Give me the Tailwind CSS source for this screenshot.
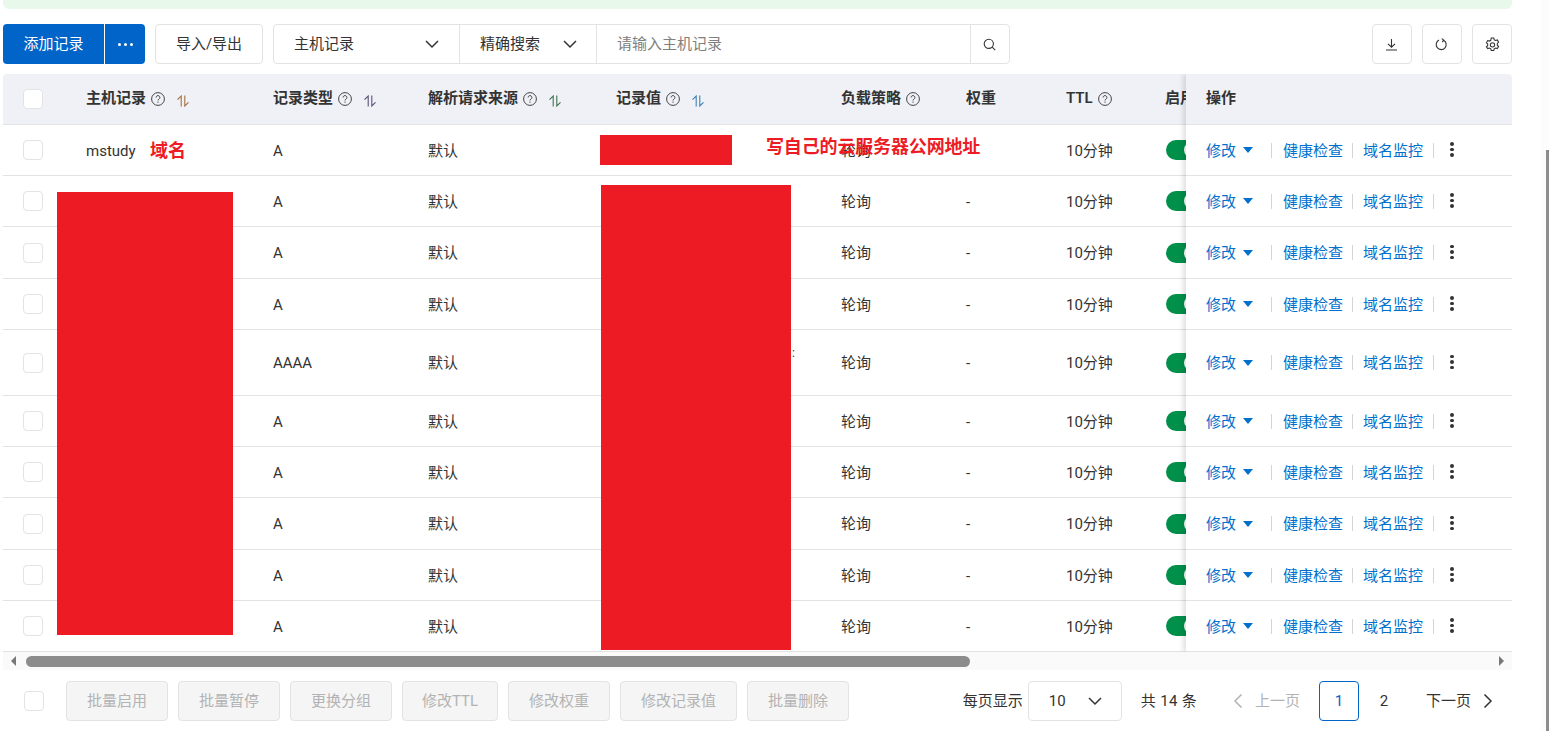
<!DOCTYPE html>
<html lang="en">
<head>
    <meta charset="UTF-8">
    <title>解析记录</title>
    <script src="https://cdn.jsdelivr.net/npm/@tailwindcss/browser@4"></script>
</head>
<body class="relative h-[731px] w-[1549px] overflow-hidden bg-white text-[15px] text-[#333] font-['Roboto','Noto_Sans_CJK_SC',sans-serif]">

    <!-- notice strip cut off by the top edge -->
    <div class="ml-[3px] h-[9px] w-[1509px] rounded-b-md bg-[#e8f8ea]"></div>

    <!-- toolbar -->
    <div class="ml-[3px] mt-[15px] flex h-[40px] w-[1509px] items-stretch">
        <button class="w-[101px] rounded-l bg-[#0064c8] text-white">添加记录</button>
        <button class="ml-px flex w-[40px] items-center justify-center gap-[3px] rounded-r bg-[#0064c8]">
            <span class="size-[3px] rounded-full bg-white"></span><span class="size-[3px] rounded-full bg-white"></span><span class="size-[3px] rounded-full bg-white"></span>
        </button>
        <button class="ml-[10px] w-[108px] rounded border border-[#e3e3e3]">导入/导出</button>
        <div class="ml-[10px] flex w-[737px] rounded border border-[#e3e3e3]">
            <div class="flex w-[186px] items-center justify-between border-r border-[#e3e3e3] pl-[20px] pr-[19px]">
                主机记录
                <svg class="size-[16px]" viewBox="0 0 16 16" fill="none" stroke="#333" stroke-width="1.5"><path d="M2 5l6 6 6-6"/></svg>
            </div>
            <div class="flex w-[137px] items-center justify-between border-r border-[#e3e3e3] pl-[20px] pr-[18px]">
                精确搜索
                <svg class="size-[16px]" viewBox="0 0 16 16" fill="none" stroke="#333" stroke-width="1.5"><path d="M2 5l6 6 6-6"/></svg>
            </div>
            <div class="flex flex-1 items-center pl-[20px] text-[#808080]">请输入主机记录</div>
            <div class="flex w-[39px] items-center justify-center border-l border-[#e3e3e3]">
                <svg class="mr-[2px] size-[13px]" viewBox="0 0 13 13" fill="none" stroke="#333" stroke-width="1.1"><circle cx="5.8" cy="5.8" r="4.6"/><path d="M9.2 9.2l3 3"/></svg>
            </div>
        </div>
        <div class="ml-auto flex gap-[10px]">
            <button class="flex w-[40px] items-center justify-center rounded border border-[#e3e3e3]">
                <svg class="mr-px size-[13px]" viewBox="0 0 13 13" fill="none" stroke="#333" stroke-width="1.1"><path d="M6.5 1v8M3 5.8l3.5 3.4L10 5.8M1 12h11"/></svg>
            </button>
            <button class="flex w-[40px] items-center justify-center rounded border border-[#e3e3e3]">
                <svg class="mr-px size-[13px]" viewBox="0 0 13 13" fill="none" stroke="#333" stroke-width="1.1"><path d="M8.6 2.2A5 5 0 1 1 4 2.1M6.8 0.6l1.9 1.6-1.5 1.9"/></svg>
            </button>
            <button class="flex w-[40px] items-center justify-center rounded border border-[#e3e3e3]">
                <svg class="size-[15px]" viewBox="0 0 14 14" fill="none" stroke="#333" stroke-width="1"><path d="M5.8 1h2.4l.4 1.6 1.3.7 1.6-.5 1.2 2.1-1.2 1.1v1.6l1.2 1.1-1.2 2.1-1.6-.5-1.3.8-.4 1.5H5.8l-.4-1.5-1.3-.8-1.6.5L1.3 9.2l1.2-1.1V6.5L1.3 5.4l1.2-2.1 1.6.5 1.3-.7z"/><circle cx="7" cy="7.3" r="2"/></svg>
            </button>
        </div>
    </div>

    <!-- table, filled in by the script below -->
    <div class="relative ml-[3px] mt-[10px] w-[1509px] overflow-hidden rounded-t">
        <div id="table"></div>
        <!-- sticky action column -->
        <div id="ops" class="absolute right-0 top-0 w-[326px] bg-white shadow-[-3px_0_5px_rgba(0,0,0,0.12)]"></div>
    </div>

    <!-- horizontal scrollbar -->
    <div class="ml-[3px] flex h-[18px] w-[1509px] items-center bg-[#fafafa]">
        <span class="ml-[8px] h-0 w-0 border-y-[5px] border-r-[5px] border-y-transparent border-r-[#777]"></span>
        <div class="ml-[10px] h-[11px] w-[944px] rounded-full bg-[#8c8c8c]"></div>
        <span class="ml-auto mr-[8px] h-0 w-0 border-y-[5px] border-l-[5px] border-y-transparent border-l-[#777]"></span>
    </div>

    <!-- footer -->
    <div class="ml-[3px] mt-[11px] flex h-[40px] w-[1509px] items-center">
        <span class="ml-[21px] size-[20px] rounded border border-[#e3e3e3]"></span>
        <div class="ml-[22px] flex h-full gap-[10px] text-[#b3b3b3]">
            <button class="w-[102px] rounded border border-[#e3e3e3] bg-[#f5f5f5]">批量启用</button>
            <button class="w-[102px] rounded border border-[#e3e3e3] bg-[#f5f5f5]">批量暂停</button>
            <button class="w-[102px] rounded border border-[#e3e3e3] bg-[#f5f5f5]">更换分组</button>
            <button class="w-[96px] rounded border border-[#e3e3e3] bg-[#f5f5f5]">修改TTL</button>
            <button class="w-[102px] rounded border border-[#e3e3e3] bg-[#f5f5f5]">修改权重</button>
            <button class="w-[117px] rounded border border-[#e3e3e3] bg-[#f5f5f5]">修改记录值</button>
            <button class="w-[102px] rounded border border-[#e3e3e3] bg-[#f5f5f5]">批量删除</button>
        </div>
        <div class="ml-auto flex h-full items-center">
            <span>每页显示</span>
            <div class="ml-[5px] flex h-full w-[94px] items-center justify-between rounded border border-[#e3e3e3] pl-[20px] pr-[18px]">
                10
                <svg class="size-[16px]" viewBox="0 0 16 16" fill="none" stroke="#333" stroke-width="1.5"><path d="M2 5l6 6 6-6"/></svg>
            </div>
            <span class="ml-[19px] tracking-[0.3px]">共 14 条</span>
            <svg class="ml-[35px] size-[14px]" viewBox="0 0 14 14" fill="none" stroke="#b3b3b3" stroke-width="1.5"><path d="M9.5 0.5L3 7l6.5 6.5"/></svg>
            <span class="ml-[9px] text-[#b3b3b3]">上一页</span>
            <div class="ml-[19px] flex h-full w-[40px] items-center justify-center rounded border border-[#0064c8] text-[#0064c8]">1</div>
            <div class="flex h-full w-[50px] items-center justify-center">2</div>
            <span class="ml-[17px]">下一页</span>
            <svg class="ml-[9px] mr-[18px] size-[14px]" viewBox="0 0 14 14" fill="none" stroke="#333" stroke-width="1.5"><path d="M4.5 0.5L11 7l-6.5 6.5"/></svg>
        </div>
    </div>

    <!-- annotations and redaction painted over the screenshot -->
    <div class="absolute left-[150px] top-[140px] text-[18px] font-bold leading-[22px] text-[#ed1c24]">域名</div>
    <div class="absolute left-[600px] top-[135px] h-[30px] w-[132px] bg-[#ed1c24]"></div>
    <div class="absolute left-[766px] top-[136px] text-[18px] font-bold leading-[22px] tracking-[-0.15px] text-[#ed1c24]">写自己的云服务器公网地址</div>
    <div class="absolute left-[57px] top-[192px] h-[443px] w-[176px] bg-[#ed1c24]"></div>
    <div class="absolute left-[601px] top-[185px] h-[465px] w-[190px] bg-[#ed1c24]"></div>
    <div class="absolute left-[792px] top-[347px] text-[12px] leading-[12px]">:</div>

    <!-- page scrollbar -->
    <div class="absolute right-0 top-0 h-full w-[8px] bg-[#fcfcfc]">
        <div class="absolute left-[5px] top-[150px] bottom-0 w-[3px] bg-[#8c8c8c]"></div>
    </div>

    <script>
        const helpIcon = '<svg class="ml-[5px] mt-[-1px] size-[14px] shrink-0" viewBox="0 0 14 14" fill="none" stroke="#444" stroke-width="1"><circle cx="7" cy="7" r="6.4"/><path d="M5.1 5.5a1.9 1.9 0 1 1 2.9 1.6c-.7.4-1 .7-1 1.4"/><path d="M7 9.6v1.2"/></svg>';
        const sortIcon = (color) => `<svg class="ml-[11px] mt-[3px] size-[14px] shrink-0" viewBox="0 0 14 14" fill="none" stroke="${color}" stroke-width="1.1"><path d="M5.2 12.5V2L1.5 5.7M8.8 1.5V12l3.7-3.7"/></svg>`;

        const widths = [83, 187, 155, 188, 225, 125, 100, 99, 121];
        const heads = [
            ["主机记录", true, "#a5713f"], ["记录类型", true, "#5d4f78"], ["解析请求来源", true, "#3f7350"], ["记录值", true, "#3f7fb0"],
            ["负载策略", true, ""], ["权重", false, ""], ["TTL", true, ""], ["启用", false, ""]
        ];
        const rows = [
            { name: "mstudy", type: "A", weight: "", h: 51 },
            { type: "A", weight: "-", h: 51 }, { type: "A", weight: "-", h: 52 }, { type: "A", weight: "-", h: 51 },
            { type: "AAAA", weight: "-", h: 66 },
            { type: "A", weight: "-", h: 51 }, { type: "A", weight: "-", h: 51 }, { type: "A", weight: "-", h: 52 },
            { type: "A", weight: "-", h: 51 }, { type: "A", weight: "-", h: 51 }
        ];
        const checkbox = '<span class="ml-[20px] block size-[20px] rounded border border-[#e3e3e3] bg-white"></span>';

        let html = '<div class="flex h-[51px] items-center border-b border-[#e3e3e3] bg-[#eff1f6]">';
        html += `<div class="shrink-0" style="width:${widths[0]}px">${checkbox}</div>`;
        heads.forEach((h, i) => {
            html += `<div class="flex shrink-0 items-center overflow-hidden whitespace-nowrap font-semibold" style="width:${widths[i + 1]}px"><span class="mb-[2px]">${h[0]}</span>${h[1] ? helpIcon : ""}${h[2] ? sortIcon(h[2]) : ""}</div>`;
        });
        html += "</div>";

        let ops = '<div class="flex h-[51px] items-center rounded-tr border-b border-[#e3e3e3] bg-[#eff1f6] pb-[2px] pl-[20px] font-semibold">操作</div>';

        rows.forEach((r) => {
            html += `<div class="flex items-center border-b border-[#e3e3e3] whitespace-nowrap" style="height:${r.h}px">`;
            html += `<div class="shrink-0" style="width:${widths[0]}px">${checkbox}</div>`;
            html += `<div class="shrink-0 pt-[2px]" style="width:${widths[1]}px">${r.name || ""}</div>`;
            html += `<div class="shrink-0 pt-[2px]" style="width:${widths[2]}px">${r.type}</div>`;
            html += `<div class="shrink-0 pt-[2px]" style="width:${widths[3]}px">默认</div>`;
            html += `<div class="shrink-0" style="width:${widths[4]}px"></div>`;
            html += `<div class="shrink-0 pt-[2px]" style="width:${widths[5]}px">轮询</div>`;
            html += `<div class="shrink-0 pt-[2px]" style="width:${widths[6]}px">${r.weight}</div>`;
            html += `<div class="shrink-0 pt-[2px]" style="width:${widths[7]}px">10分钟</div>`;
            html += '<div class="shrink-0"><span class="ml-px flex h-[20px] w-[36px] items-center justify-end rounded-full bg-[#00904a] pr-[2px]"><i class="size-[16px] rounded-full bg-white"></i></span></div>';
            html += "</div>";

            ops += `<div class="flex items-center border-b border-[#e3e3e3] pl-[20px] text-[#0070cc]" style="height:${r.h}px">
                <span class="pt-[2px]">修改</span><span class="ml-[7px] h-0 w-0 border-x-[5px] border-t-[6px] border-x-transparent border-t-[#0070cc]"></span>
                <span class="ml-[18px] h-[15px] w-px bg-[#d5d5d5]"></span><span class="ml-[11px] pt-[2px]">健康检查</span>
                <span class="ml-[9px] h-[15px] w-px bg-[#d5d5d5]"></span><span class="ml-[10px] pt-[2px]">域名监控</span>
                <span class="ml-[10px] h-[15px] w-px bg-[#d5d5d5]"></span>
                <span class="ml-[16px] mb-px flex flex-col gap-[2px]"><i class="size-[3.5px] rounded-full bg-[#333]"></i><i class="size-[3.5px] rounded-full bg-[#333]"></i><i class="size-[3.5px] rounded-full bg-[#333]"></i></span>
            </div>`;
        });

        document.getElementById("table").innerHTML = html;
        document.getElementById("ops").innerHTML = ops;
    </script>
</body>
</html>
